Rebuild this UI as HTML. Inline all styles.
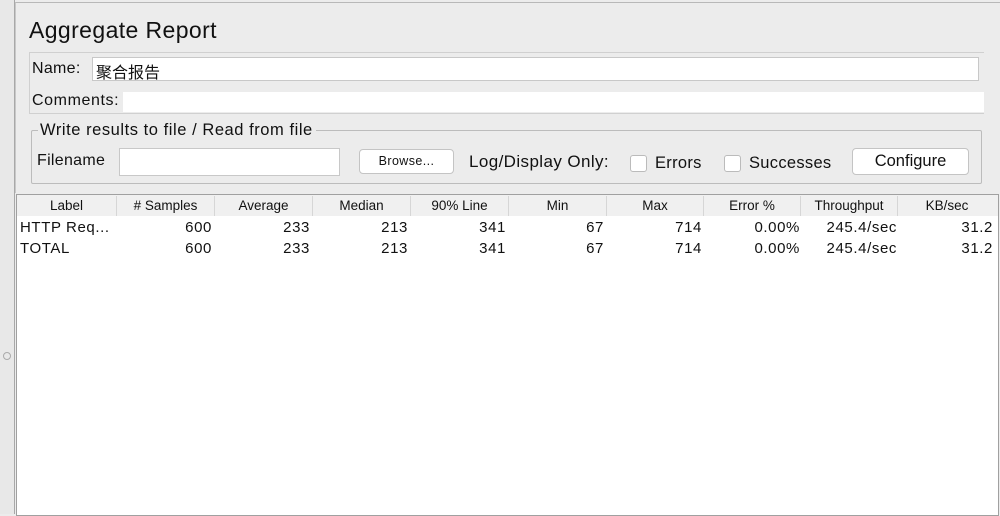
<!DOCTYPE html>
<html><head><style>
body{margin:0;width:1000px;height:514px;background:#ececec;font-family:"Liberation Sans","Noto Sans CJK SC",sans-serif;position:relative;overflow:hidden;color:#111}
.a{position:absolute}
.tf{position:absolute;background:#fff;border:1px solid #c8c8c8;box-sizing:border-box}
.btn{position:absolute;background:#fff;border:1px solid #c4c4c4;border-radius:4px;box-sizing:border-box;text-align:center}
.cb{position:absolute;width:17px;height:17px;background:#fff;border:1px solid #bbb;border-radius:3px;box-sizing:border-box}
.hd{position:absolute;top:196px;height:20px;font-size:13.5px;line-height:20px;text-align:center;border-right:1px solid #d6d6d6;box-sizing:border-box}
.c{position:absolute;font-size:15px;line-height:20px;text-align:right;letter-spacing:0.6px}
</style></head><body>
<div class="a" style="left:0;top:0;width:14px;height:514px;background:#e8e8e8;border-right:1px solid #a8a8a8"></div>
<div class="a" style="left:3px;top:352px;width:6px;height:6px;border:1px solid #aaa;border-radius:50%"></div>
<div class="a" style="left:15px;top:2px;width:985px;height:190px;border-top:1px solid #b8b8b8;border-left:1px solid #c8c8c8"></div>
<div class="a" style="left:29px;top:17px;font-size:23px;letter-spacing:0.4px">Aggregate Report</div>
<div class="a" style="left:29px;top:52px;width:954px;height:60px;border:1px solid #d0d0d0;border-right:none"></div>
<div class="a" style="left:32px;top:60px;font-size:16px;letter-spacing:0.3px">Name:</div>
<div class="tf" style="left:92px;top:57px;width:887px;height:24px"></div>
<div class="a" style="left:96px;top:59px;font-size:16px">聚合报告</div>
<div class="a" style="left:32px;top:92px;font-size:16px;letter-spacing:0.6px">Comments:</div>
<div class="tf" style="left:123px;top:92px;width:861px;height:20px;border:none"></div>
<div class="a" style="left:31px;top:130px;width:949px;height:52px;border:1px solid #bcbcbc;border-radius:2px"></div>
<div class="a" style="left:38px;top:121px;font-size:16.5px;letter-spacing:0.55px;background:#ececec;padding:0 3px 0 2px">Write results to file / Read from file</div>
<div class="a" style="left:37px;top:152px;font-size:16px;letter-spacing:0.3px">Filename</div>
<div class="tf" style="left:119px;top:148px;width:221px;height:28px"></div>
<div class="btn" style="left:359px;top:149px;width:95px;height:25px;font-size:12.5px;line-height:23px;letter-spacing:0.4px">Browse...</div>
<div class="a" style="left:469px;top:152px;font-size:17px;letter-spacing:0.4px">Log/Display Only:</div>
<div class="cb" style="left:630px;top:155px"></div>
<div class="a" style="left:655px;top:154px;font-size:16.5px;letter-spacing:0.3px">Errors</div>
<div class="cb" style="left:724px;top:155px"></div>
<div class="a" style="left:749px;top:154px;font-size:16.5px;letter-spacing:0.3px">Successes</div>
<div class="btn" style="left:852px;top:148px;width:117px;height:27px;font-size:16.5px;line-height:25px">Configure</div>
<div class="a" style="left:16px;top:194px;width:983px;height:322px;background:#fff;border:1px solid #a0a0a0;box-sizing:border-box"></div>
<div class="a" style="left:17px;top:195px;width:981px;height:21px;background:#f0f0f0"></div>
<div class="hd" style="left:17px;width:100px">Label</div>
<div class="hd" style="left:117px;width:98px"># Samples</div>
<div class="hd" style="left:215px;width:98px">Average</div>
<div class="hd" style="left:313px;width:98px">Median</div>
<div class="hd" style="left:411px;width:98px">90% Line</div>
<div class="hd" style="left:509px;width:98px">Min</div>
<div class="hd" style="left:607px;width:97px">Max</div>
<div class="hd" style="left:704px;width:97px">Error %</div>
<div class="hd" style="left:801px;width:97px">Throughput</div>
<div class="hd" style="left:898px;width:98px;border:none">KB/sec</div>
<div class="c" style="left:20px;top:218px;text-align:left">HTTP Req...</div>
<div class="c" style="left:20px;top:239px;text-align:left">TOTAL</div>
<div class="c" style="right:788px;top:218px">600</div><div class="c" style="right:788px;top:239px">600</div>
<div class="c" style="right:690px;top:218px">233</div><div class="c" style="right:690px;top:239px">233</div>
<div class="c" style="right:592px;top:218px">213</div><div class="c" style="right:592px;top:239px">213</div>
<div class="c" style="right:494px;top:218px">341</div><div class="c" style="right:494px;top:239px">341</div>
<div class="c" style="right:396px;top:218px">67</div><div class="c" style="right:396px;top:239px">67</div>
<div class="c" style="right:298px;top:218px">714</div><div class="c" style="right:298px;top:239px">714</div>
<div class="c" style="right:200px;top:218px">0.00%</div><div class="c" style="right:200px;top:239px">0.00%</div>
<div class="c" style="right:103px;top:218px">245.4/sec</div><div class="c" style="right:103px;top:239px">245.4/sec</div>
<div class="c" style="right:7px;top:218px">31.2</div><div class="c" style="right:7px;top:239px">31.2</div>
</body></html>
